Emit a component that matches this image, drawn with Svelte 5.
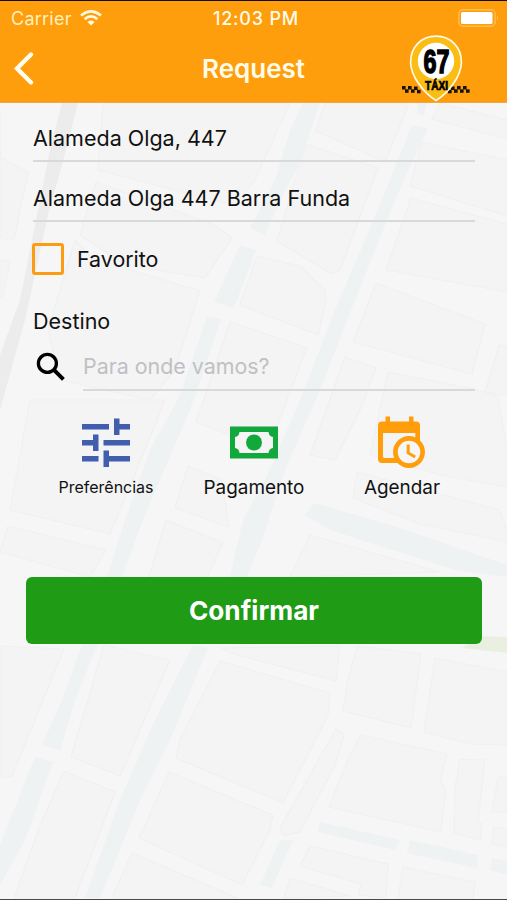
<script>
  const blocks = [
    '0,112 0,157 28,172 20,210 14,240 0,238 0,150',
    '0,260 10,262 2,298 0,298',
    '103,103 98,170 235,206 255,180 290,103',
    '75,240 92,258 180,285 200,290 175,370 150,400 60,380 48,330',
    '96,182 215,225 232,238 205,278 125,265 80,235',
    '325,103 409,103 385,162 316,131',
    '440,103 507,120 507,139 432,119',
    '422,142 507,160 507,216 410,186',
    '411,198 507,224 507,292 386,270',
    '306,144 378,168 340,270 332,274 277,241',
    '257,256 300,266 325,290 326,300 318,335 240,305',
    '230,322 307,348 285,405 268,450 196,422',
    '376,283 485,324 472,374 353,342',
    '345,357 376,368 360,410 335,460 310,455',
    '388,372 470,388 498,396 507,450 507,487 440,475 370,455',
    '499,345 507,347 507,395 485,392',
    '30,400 165,400 145,450 110,534 10,510',
    '8,526 106,550 90,577 0,552',
    '188,466 222,480 229,527 175,508',
    '166,520 223,543 207,577 149,577',
    '357,472 500,510 507,530 507,542 420,524 353,498',
    '310,535 440,572 290,577',
    '0,646 64,649 12,776 0,778',
    '104,645 170,660 120,776 71,757',
    '64,771 115,792 75,898 14,898 40,826',
    '220,661 330,693 328,715 283,803 176,758 180,740',
    '169,772 273,815 270,830 242,885 139,838',
    '132,853 238,898 112,898',
    '222,648 340,646 336,681 230,653',
    '357,646 421,654 411,728 343,711 347,685',
    '435,658 507,672 507,745 470,744 424,732',
    '361,735 447,754 440,780 446,789 441,832 329,807 350,755',
    '336,729 344,735 335,765 300,832 284,836 280,828',
    '460,759 485,760 478,822 482,824 480,840 454,833 455,788',
    '498,777 507,778 507,813 492,812',
    '310,846 388,864 386,898 359,895 361,884 300,866',
    '290,878 350,896 284,898',
    '403,867 475,882 473,898 398,898',
    '494,827 507,829 507,847 492,844',
  ];

  const avenues = [
    '303,103 320,103 297,170 285,190 265,235 250,228 275,180 290,130',
    '240,245 256,250 234,308 214,302',
    '207,317 221,319 190,410 160,480 143,520 122,577 107,577 125,520 150,450 180,395',
    '418,103 427,103 424,116 417,114',
    '412,125 428,128 395,200 355,300 318,395 285,470 262,540 247,577 230,577 243,520 270,470 300,400 335,310 365,240 392,175',
    '315,503 400,528 507,565 507,577 455,570 330,530 305,515',
    '83,643 98,643 75,700 60,751 42,745 62,700',
    '35,757 53,762 25,840 0,885 0,845',
    '193,645 208,648 170,740 140,800 100,898 85,898 120,800 155,720',
    '280,840 293,840 272,888 260,885',
    '320,822 400,840 395,850 318,832',
    '410,840 478,855 477,868 407,853',
    '492,858 507,861 507,875 490,870',
  ];

  // Checkered taxi band: [x, y] of each dark square on both sides of the pin.
  const checks = [
    [1, 51], [7, 51], [13, 51.5], [4, 54.3], [10, 54.3], [16, 54.8],
    [50, 51.5], [56, 51], [62, 51], [47, 54.8], [53, 54.3], [59, 54.3], [65, 54.3],
  ];

  let favorite = $state(false);
  let destination = $state('');
</script>

<div class="screen">
  <svg class="map" viewBox="0 0 507 900" aria-hidden="true">
    <rect width="507" height="900" fill="#f6f6f6" />
    <g fill="#f4f4f4" stroke="#f0f0f0" stroke-width="1.2" stroke-linejoin="round">
      {#each blocks as points}<polygon {points} />{/each}
    </g>
    <polygon points="62,103 78,103 62,165 48,215 25,320 0,410 0,355 20,300 38,210 50,150" fill="#ececec" />
    <g fill="#eef2f3">
      {#each avenues as points}<polygon {points} />{/each}
    </g>
    <path d="M480 636 507 637V653L462 648Z" fill="#e9f0e1" />
  </svg>

  <header>
    <div class="status">
      <span class="carrier">Carrier</span>
      <svg class="wifi" width="22" height="16" viewBox="0 0 22 16" fill="none" stroke="#fff8dc" stroke-width="2.7">
        <path d="M1 5.5Q11-2.6 21 5.5M4.6 9.1Q11 3.8 17.4 9.1" />
        <path d="M11 15.6 7.4 11.9Q11 9 14.6 11.9Z" fill="#fff8dc" stroke="none" />
      </svg>
      <span class="time">12:03 PM</span>
      <svg class="battery" width="42" height="18" viewBox="0 0 42 18">
        <rect x=".8" y=".8" width="36.4" height="16.4" rx="4" fill="none" stroke="#ffbe55" stroke-width="1.4" />
        <rect x="3" y="3" width="31.5" height="12" rx="1.5" fill="#fff" />
        <path d="M39 6.5Q41.5 9 39 11.5Z" fill="#ffbe55" />
      </svg>
    </div>
    <div class="nav">
      <svg class="back" width="22" height="34" viewBox="0 0 22 34" fill="none" stroke="#fffdf0" stroke-width="4.4" stroke-linecap="round" stroke-linejoin="miter">
        <path d="M18 2.500 4 16.500 18 30.500" />
      </svg>
      <h1>Request</h1>
      <svg class="logo" width="72" height="68" viewBox="0 0 72 68">
        <g fill="#17130a">
          {#each checks as [x, y]}<rect {x} {y} width="3.6" height="3.5" />{/each}
        </g>
        <path d="M35 1.2C20 1.2 9.6 12.5 9.6 27c0 15 14 31.500 25.4 38.500C46.4 58.500 60.4 42 60.4 27 60.4 12.500 50 1.2 35 1.2Z" fill="#fbbd13" stroke="#fffbe8" stroke-width="1.7" />
        <circle cx="35" cy="26" r="18.2" fill="#fff" />
        <text x="22.500" y="38.300" font-size="34" textLength="26" lengthAdjust="spacingAndGlyphs" stroke="#000" stroke-width="1.5">67</text>
        <text x="24" y="54.700" font-size="12" textLength="23" lengthAdjust="spacingAndGlyphs" stroke="#000" stroke-width=".7">TÁXI</text>
      </svg>
    </div>
  </header>

  <main>
    <div class="field first">Alameda Olga, 447</div>
    <div class="field second">Alameda Olga 447 Barra Funda</div>
    <label class="favorite">
      <input type="checkbox" bind:checked={favorite} />
      <span>Favorito</span>
    </label>
    <div class="label">Destino</div>
    <div class="search">
      <svg width="30" height="30" viewBox="0 0 30 30" fill="none" stroke="#000">
        <circle cx="11.4" cy="11.4" r="9" stroke-width="3.3" />
        <path d="M17.4 17.4 27.4 27.4" stroke-width="4" />
      </svg>
      <input type="text" placeholder="Para onde vamos?" bind:value={destination} />
    </div>

    <div class="options">
      <div class="option">
        <svg width="52" height="54" viewBox="0 0 52 54" fill="#415fae">
          <path d="M2 9h27v5.5H2zM34 3.5h5.5V9H50v5.5H39.500V20H34zM2 25h11v-5.500h5.500V36H13v-5.500H2zM23.500 25H50v5.500H23.500zM2 41h16.500v5.500H2zM23.500 35.500H29V41h21v5.500H29V52h-5.500z" />
        </svg>
        <span class="small">Preferências</span>
      </div>
      <div class="option">
        <svg width="52" height="54" viewBox="0 0 52 54">
          <path d="M2 11.500h48v32H2z" fill="#13a83b" />
          <path d="M11.500 17h29q.5 4.500 4.500 5v11q-4 .5-4.500 5h-29Q11 33.500 7 33V22Q11 21.500 11.500 17Z" fill="#f5f5f5" />
          <circle cx="26" cy="27.500" r="8" fill="#13a83b" />
        </svg>
        <span>Pagamento</span>
      </div>
      <div class="option">
        <svg width="52" height="54" viewBox="0 0 52 54" fill="#ff9d0b">
          <path fill-rule="evenodd" d="M9.500 1.500h4.500v5h19v-5h4.500v5h2.500q4 0 4 4v20h-4.700V18H7v23.500q0 1.500 1.500 1.500H23v5H6q-4 0-4-4V10.500q0-4 4-4h3.500z" />
          <circle cx="33" cy="37" r="13.600" fill="#f6f6f6" stroke="#ff9d0b" stroke-width="4.700" />
          <path d="M32.200 29.500v8.500l7 4" fill="none" stroke="#ff9d0b" stroke-width="3" />
        </svg>
        <span>Agendar</span>
      </div>
    </div>

    <button type="button">Confirmar</button>
  </main>
</div>

<style>
  :global(body) { margin: 0; }
  .screen {
    position: relative;
    box-sizing: border-box;
    width: 507px;
    height: 900px;
    overflow: hidden;
    border-top: 1px solid #120d05;
    border-bottom: 1px solid #484848;
    font-family: Inter, "Liberation Sans", sans-serif;
    color: #111;
  }
  .map { position: absolute; left: 0; top: -1px; width: 507px; height: 900px; filter: blur(0.5px); }
  header {
    position: relative;
    box-sizing: border-box;
    height: 102px;
    background: #fe9e0c;
    border-bottom: 1px solid #eda848;
    color: #fffbea;
  }
  .status {
    display: grid;
    grid-template-columns: 69px 100px 152px 1fr;
    align-items: center;
    height: 34px;
    padding-left: 11px;
    font-size: 18px;
  }
  .carrier { color: #fff0bd; letter-spacing: 0.25px; }
  .time { text-align: center; font-weight: 500; letter-spacing: 0.8px; white-space: nowrap; }
  .battery { justify-self: end; margin-right: 7px; }
  .nav {
    display: grid;
    grid-template-columns: 100px 307px 100px;
    align-items: center;
    height: 68px;
  }
  .back { margin: 0 0 0 13px; }
  h1 { margin: 0; text-align: center; font-size: 26px; line-height: 30px; font-weight: 600; }
  .logo { margin-left: -6px; }
  .logo text { font-family: "Liberation Sans", sans-serif; font-weight: 700; fill: #000; }
  main { position: relative; display: flex; flex-direction: column; padding: 0 25px 0 26px; }
  .field {
    box-sizing: border-box;
    height: 60px;
    margin: 0 7px;
    padding-top: 22px;
    border-bottom: 2px solid #d7d9da;
    font-size: 21.5px;
    line-height: 28px;
    white-space: nowrap;
  }
  .first { height: 59px; padding-top: 21px; }
  .favorite { display: flex; align-items: center; gap: 13px; height: 32px; margin: 21px 0 0 6px; font-size: 21.4px; }
  .favorite input {
    appearance: none;
    box-sizing: border-box;
    width: 32px;
    height: 32px;
    margin: 0;
    border: 3px solid #fb9c13;
    border-radius: 3px;
  }
  .label { margin: 32px 0 0 7px; font-size: 21.5px; line-height: 28px; }
  .search { display: flex; align-items: center; height: 54px; margin: 2px 7px 0 10px; gap: 17px; }
  .search svg { position: relative; top: 3px; }
  .search input {
    flex: 1;
    min-width: 0;
    box-sizing: border-box;
    height: 54px;
    padding: 6px 0 0;
    border: 0;
    border-bottom: 2px solid #d7d9da;
    outline: 0;
    background: none;
    font: 21.4px Inter, sans-serif;
  }
  .search input::placeholder { color: #bfc0c3; opacity: 1; }
  .options { display: grid; grid-template-columns: repeat(3, 148px); margin: 24px 0 0 6px; }
  .option { display: flex; flex-direction: column; align-items: center; font-size: 18.9px; line-height: 24px; }
  .option span { margin-top: 7px; }
  .option .small { margin-top: 6px; font-size: 16px; }
  button {
    height: 67px;
    margin: 77px 0 0;
    padding: 0;
    border: 0;
    border-radius: 6px;
    background: #209b16;
    color: #fff;
    font: 700 26.2px Inter, sans-serif;
  }
</style>
